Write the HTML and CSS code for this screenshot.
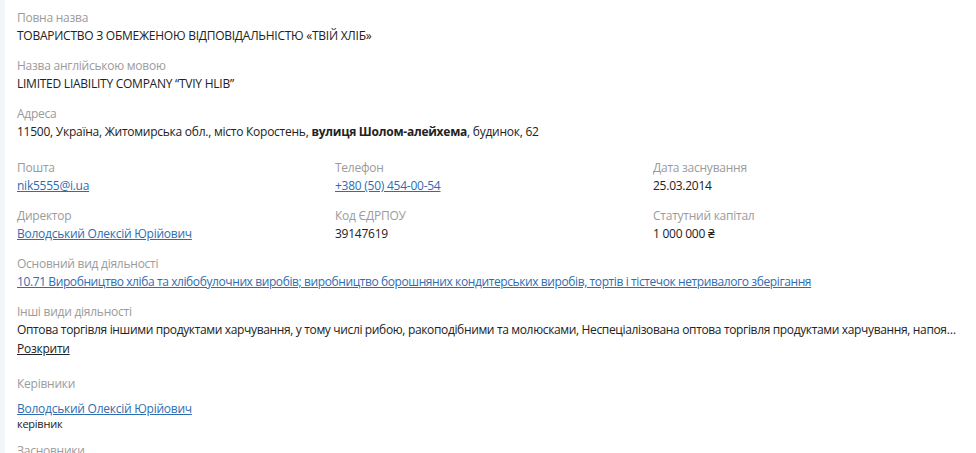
FILE: index.html
```html
<!DOCTYPE html>
<html lang="uk">
<head>
    <meta charset="UTF-8">
    <meta name="viewport" content="width=device-width, initial-scale=1.0">
    <title>ТОВ «ТВІЙ ХЛІБ»</title>
    <link rel="stylesheet" href="styles.css">
</head>
<body>
    <div class="page">
        <div class="field">
            <div class="label">Повна назва</div>
            <div class="value">ТОВАРИСТВО З ОБМЕЖЕНОЮ ВІДПОВІДАЛЬНІСТЮ «ТВІЙ ХЛІБ»</div>
        </div>
        <div class="field">
            <div class="label">Назва англійською мовою</div>
            <div class="value">LIMITED LIABILITY COMPANY “TVIY HLIB”</div>
        </div>
        <div class="field">
            <div class="label">Адреса</div>
            <div class="value">11500, Україна, Житомирська обл., місто Коростень, <b>вулиця Шолом-алейхема</b>, будинок, 62</div>
        </div>

        <div class="grid">
            <div class="field">
                <div class="label">Пошта</div>
                <div class="value"><a href="#">nik5555@i.ua</a></div>
            </div>
            <div class="field">
                <div class="label">Телефон</div>
                <div class="value"><a href="#">+380 (50) 454-00-54</a></div>
            </div>
            <div class="field">
                <div class="label">Дата заснування</div>
                <div class="value">25.03.2014</div>
            </div>
            <div class="field">
                <div class="label">Директор</div>
                <div class="value"><a href="#">Володський Олексій Юрійович</a></div>
            </div>
            <div class="field">
                <div class="label">Код ЄДРПОУ</div>
                <div class="value">39147619</div>
            </div>
            <div class="field">
                <div class="label">Статутний капітал</div>
                <div class="value">1 000 000 ₴</div>
            </div>
        </div>

        <div class="field">
            <div class="label">Основний вид діяльності</div>
            <div class="value activity"><a href="#">10.71 Виробництво хліба та хлібобулочних виробів; виробництво борошняних кондитерських виробів, тортів і тістечок нетривалого зберігання</a></div>
        </div>
        <div class="field field-wide">
            <div class="label">Інші види діяльності</div>
            <div class="value clip">Оптова торгівля іншими продуктами харчування, у тому числі рибою, ракоподібними та молюсками, Неспеціалізована оптова торгівля продуктами харчування, напоями та тютюновими виробами</div>
            <a href="#" class="toggle">Розкрити</a>
        </div>

        <div class="field">
            <div class="label">Керівники</div>
            <div class="person">
                <a href="#">Володський Олексій Юрійович</a>
                <div class="role">керівник</div>
            </div>
        </div>
        <div class="field">
            <div class="label">Засновники</div>
        </div>
    </div>
</body>
</html>
```

FILE: styles.css
```css
body {
    margin: 0;
    font-family: "Open Sans", "Noto Sans", sans-serif;
    font-size: 12px;
    letter-spacing: -0.25px;
    color: #222;
    background: #fff;
}
.page {
    border-left: 5px solid #f2f6f9;
    padding: 9px 12px 0 12px;
    height: 453px;
    box-sizing: border-box;
    overflow: hidden;
}
.field {
    margin-bottom: 12px;
}
.label {
    color: #9b9b9b;
    line-height: 18px;
}
.value {
    line-height: 18px;
}
.value b {
    font-weight: 700;
}
.activity {
    letter-spacing: -0.4px;
}
a {
    color: #2f6db0;
    text-decoration: underline;
}
.grid {
    display: grid;
    grid-template-columns: 318px 318px 1fr;
    margin-top: 18px;
}
.field-wide {
    margin-bottom: 17px;
}
.clip {
    white-space: nowrap;
    overflow: hidden;
    text-overflow: ellipsis;
    letter-spacing: -0.35px;
}
.toggle {
    display: inline-block;
    color: #222;
    line-height: 19px;
}
.person {
    margin-top: 7px;
    line-height: 18px;
}
.role {
    font-size: 11px;
    line-height: 12px;
}
```
